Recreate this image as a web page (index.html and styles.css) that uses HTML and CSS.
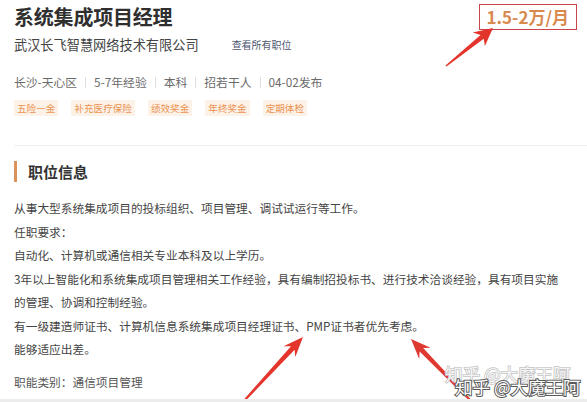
FILE: index.html
```html
<!DOCTYPE html>
<html lang="zh-CN">
<head>
<meta charset="utf-8">
<link rel="stylesheet" href="styles.css">
</head>
<body>
<div class="page">
  <header class="job-head">
    <div class="job-main">
      <h1 class="job-title">系统集成项目经理</h1>
      <div class="company-row">
        <span class="company">武汉长飞智慧网络技术有限公司</span>
        <a class="all-jobs">查看所有职位</a>
      </div>
      <div class="info-row">
        <span>长沙-天心区</span><i class="sep"></i>
        <span>5-7年经验</span><i class="sep"></i>
        <span>本科</span><i class="sep"></i>
        <span>招若干人</span><i class="sep"></i>
        <span>04-02发布</span>
      </div>
      <div class="tags">
        <span class="tag">五险一金</span>
        <span class="tag">补充医疗保险</span>
        <span class="tag">绩效奖金</span>
        <span class="tag">年终奖金</span>
        <span class="tag">定期体检</span>
      </div>
    </div>
    <div class="salary">1.5-2万/月</div>
  </header>
  <hr class="divider">
  <h2 class="section-title"><i class="bar"></i>职位信息</h2>
  <div class="desc">
    <p>从事大型系统集成项目的投标组织、项目管理、调试试运行等工作。</p>
    <p>任职要求：</p>
    <p>自动化、计算机或通信相关专业本科及以上学历。</p>
    <p>3年以上智能化和系统集成项目管理相关工作经验，具有编制招投标书、进行技术洽谈经验，具有项目实施的管理、协调和控制经验。</p>
    <p>有一级建造师证书、计算机信息系统集成项目经理证书、PMP证书者优先考虑。</p>
    <p>能够适应出差。</p>
  </div>
  <p class="category">职能类别：通信项目管理</p>

  <svg class="arrows" width="587" height="402" viewBox="0 0 587 402">
    <polygon fill="#e4352c" points="493,28 484.9,46.1 483.7,38.8 446.5,66.6 445.5,65.4 480.5,34.9 472.7,32.6"/>
    <polygon fill="#e4352c" points="303,337 295.3,357.1 294.6,349.7 243.7,402.7 242.3,401.3 291,346.3 283.6,346.3"/>
    <polygon fill="#de3a31" points="411,339 430.6,347.8 423.2,348.1 472.7,401.3 471.3,402.7 419.6,351.5 419.2,359"/>
  </svg>
  <div class="watermark faint">知乎 @大魔王阿</div>
  <div class="watermark strong">知乎 @大魔王阿</div>
</div>
</body>
</html>
```
FILE: styles.css
```css
* { box-sizing: border-box; }
html, body { margin: 0; padding: 0; background: #fff; }
body {
  font-family: "Noto Sans CJK SC", "Noto Sans", sans-serif;
  color: #333;
}
.page {
  position: relative;
  width: 587px;
  height: 402px;
  overflow: hidden;
  padding-left: 14px;
  border-bottom: 3px solid #ececec;
}
.job-head {
  display: flex;
  justify-content: space-between;
  align-items: flex-start;
}
.job-title {
  margin: 5px 0 0;
  font-size: 20px;
  line-height: 24px;
  font-weight: 700;
  color: #2f2f2f;
  letter-spacing: -0.2px;
}
.company-row {
  margin-top: 7px;
  display: flex;
  align-items: center;
  height: 18px;
}
.company {
  font-size: 13.2px;
  color: #444;
  line-height: 18px;
}
.all-jobs {
  margin-left: 33px;
  font-size: 10px;
  color: #4d5670;
  line-height: 18px;
}
.info-row {
  margin-top: 19px;
  display: flex;
  align-items: center;
  height: 18px;
  font-size: 11.8px;
  color: #6a6a6a;
  line-height: 18px;
}
.sep {
  display: inline-block;
  width: 1px;
  height: 11px;
  background: #e0e0e0;
  margin: 0 8px;
}
.tags {
  margin-top: 9px;
  display: flex;
  gap: 13px;
}
.tag {
  font-size: 9.6px;
  line-height: 16px;
  height: 16px;
  padding: 0 3px;
  color: #ec9250;
  background: #fdf2e8;
}
.salary {
  margin: 4px 10px 0 0;
  border: 1.5px solid #c8434a;
  padding: 0 7px;
  height: 26px;
  line-height: 23px;
  font-size: 17px;
  font-weight: 700;
  color: #d98a4f;
}
.divider {
  margin: 29px 0 0;
  border: 0;
  height: 1px;
  background: #eeeeee;
}
.section-title {
  margin: 15px 0 0;
  display: flex;
  align-items: center;
  height: 21px;
  font-size: 15px;
  font-weight: 700;
  color: #333;
}
.bar {
  display: inline-block;
  width: 3px;
  height: 21px;
  background: #d9935b;
  margin-right: 11px;
}
.desc {
  margin-top: 14px;
  width: 552px;
  font-size: 11.7px;
  line-height: 23.5px;
  color: #444;
}
.desc p { margin: 0; }
.category {
  margin: 9px 0 0;
  font-size: 11.7px;
  line-height: 23.5px;
  color: #555;
}
.arrows {
  position: absolute;
  left: 0;
  top: 0;
  pointer-events: none;
}
.watermark {
  position: absolute;
  font-size: 17.5px;
  line-height: 20px;
  white-space: nowrap;
  paint-order: stroke fill;
}
.watermark.faint {
  left: 445px;
  top: 364px;
  color: #f4f4f4;
  -webkit-text-stroke: 1.5px #c4c4c4;
}
.watermark.strong {
  left: 455px;
  top: 377px;
  color: #ffffff;
  -webkit-text-stroke: 2px #5a5a5a;
}
```
